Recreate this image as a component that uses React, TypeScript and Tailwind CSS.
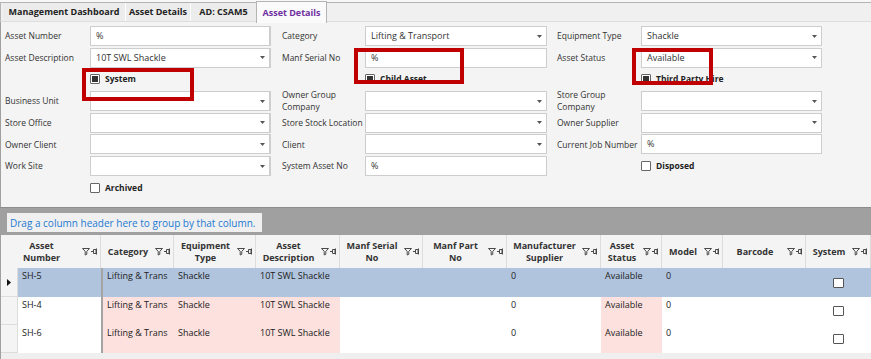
import React from "react";

const Arrow = () => (
  <svg width="5" height="3" viewBox="0 0 5 3" className="shrink-0">
    <path d="M0 0H5L2.5 3Z" fill="#555" />
  </svg>
);

function Input({ value, dd }: { value?: string; dd?: boolean }) {
  return (
    <div className="h-[20px] bg-white border border-[#cdcdcd] flex items-center pl-[5px] pr-[4px] text-[#333]">
      <span className="flex-1 whitespace-nowrap overflow-hidden">{value}</span>
      {dd && <Arrow />}
    </div>
  );
}

function Check({ checked, label }: { checked?: boolean; label: string }) {
  return (
    <div className="flex items-center gap-[5px] h-[20px]">
      <span className="w-[10px] h-[10px] border border-[#666] bg-white rounded-[1px] flex items-center justify-center shrink-0">
        {checked && <span className="w-[6px] h-[6px] bg-[#333]" />}
      </span>
      <span className="font-bold text-[8.5px] text-[#222] whitespace-nowrap">{label}</span>
    </div>
  );
}

function Label({ children, mid, last }: { children?: React.ReactNode; mid?: boolean; last?: boolean }) {
  return (
    <div
      className={
        "flex items-center text-[8.5px] leading-[11.6px] text-[#333] whitespace-nowrap " +
        (mid ? "pl-[11px] border-l border-[#cfcfcf]" : last ? "pl-[10px]" : "")
      }
    >
      {children}
    </div>
  );
}

const FilterPin = () => (
  <svg width="16" height="9" viewBox="0 0 16 9" className="shrink-0">
    <path d="M0.5 1.5H7.5L4.8 4.3V7.3L3.2 8V4.3Z" fill="none" stroke="#4a4a4a" strokeWidth="1" strokeLinejoin="round" />
    <path d="M9 4.5H11.5" stroke="#4a4a4a" strokeWidth="1" />
    <path d="M11.5 2.5H14V6.5H11.5Z" fill="none" stroke="#4a4a4a" strokeWidth="1" />
    <path d="M14.5 1.5V7.5" stroke="#4a4a4a" strokeWidth="1" />
  </svg>
);

type Col = { key: string; title: string[]; w: number; pink?: boolean };

const cols: Col[] = [
  { key: "num", title: ["Asset", "Number"], w: 83 },
  { key: "cat", title: ["Category"], w: 73, pink: true },
  { key: "eq", title: ["Equipment", "Type"], w: 82, pink: true },
  { key: "desc", title: ["Asset", "Description"], w: 84, pink: true },
  { key: "serial", title: ["Manf Serial", "No"], w: 83 },
  { key: "part", title: ["Manf Part", "No"], w: 84 },
  { key: "sup", title: ["Manufacturer", "Supplier"], w: 94 },
  { key: "status", title: ["Asset", "Status"], w: 61, pink: true },
  { key: "model", title: ["Model"], w: 61 },
  { key: "barcode", title: ["Barcode"], w: 83 },
  { key: "system", title: ["System"], w: 65 },
];

const rows: Record<string, string>[] = [
  { num: "SH-5", cat: "Lifting & Trans", eq: "Shackle", desc: "10T SWL Shackle", sup: "0", status: "Available", model: "0" },
  { num: "SH-4", cat: "Lifting & Trans", eq: "Shackle", desc: "10T SWL Shackle", sup: "0", status: "Available", model: "0" },
  { num: "SH-6", cat: "Lifting & Trans", eq: "Shackle", desc: "10T SWL Shackle", sup: "0", status: "Available", model: "0" },
];
const rowH = [29, 28, 28];

export default function App() {
  return (
    <div className="relative w-[871px] h-[359px] overflow-hidden bg-[#f4f4f4] font-['Open_Sans','Noto_Sans',sans-serif] text-[9px] leading-[12px] text-[#333]">
      {/* Tabs */}
      <div className="h-[22px] pt-[2px] bg-[#f7f7f7]">
        <div className="h-[20px] border-t border-l border-[#b4b4b4] bg-[#f0f0f0] flex items-stretch pl-[2px] border-b border-b-[#dedede]">
          <div className="w-[123px] flex items-center justify-center font-bold text-[#222] bg-[#ececec] border-r border-white">
            Management Dashboard
          </div>
          <div className="w-[65px] flex items-center justify-center font-bold text-[#222] bg-[#ececec] border-r border-white">
            Asset Details
          </div>
          <div className="w-[65px] flex items-center justify-center font-bold text-[#222] bg-[#ececec]">
            AD: CSAM5
          </div>
          <div className="w-[71px] -mt-[2px] h-[22px] flex items-center justify-center font-bold text-[#70309f] bg-[#fafafa] border-x border-t border-[#b4b4b4]">
            Asset Details
          </div>
        </div>
      </div>

      {/* Form */}
      <div className="h-[185px] border-l border-[#a0a0a0] bg-[#f4f4f4] pt-[4px] pl-[4px]">
        <div className="grid grid-cols-[85px_180px_95px_182px_94px_181px] auto-rows-[20px] gap-y-[1.7px]">
          <Label>Asset Number</Label>
          <Input value="%" />
          <Label mid>Category</Label>
          <Input value="Lifting & Transport" dd />
          <Label last>Equipment Type</Label>
          <Input value="Shackle" dd />

          <Label>Asset Description</Label>
          <Input value="10T SWL Shackle" dd />
          <Label mid>Manf Serial No</Label>
          <Input value="%" />
          <Label last>Asset Status</Label>
          <Input value="Available" dd />

          <div />
          <Check checked label="System" />
          <div />
          <Check checked label="Child Asset" />
          <div />
          <Check checked label="Third Party Hire" />

          <Label>Business Unit</Label>
          <Input dd />
          <Label mid>
            Owner Group
            <br />
            Company
          </Label>
          <Input dd />
          <Label last>
            Store Group
            <br />
            Company
          </Label>
          <Input dd />

          <Label>Store Office</Label>
          <Input dd />
          <Label mid>Store Stock Location</Label>
          <Input dd />
          <Label last>Owner Supplier</Label>
          <Input dd />

          <Label>Owner Client</Label>
          <Input dd />
          <Label mid>Client</Label>
          <Input dd />
          <Label last>Current Job Number</Label>
          <Input value="%" />

          <Label>Work Site</Label>
          <Input dd />
          <Label mid>System Asset No</Label>
          <Input value="%" />
          <div />
          <Check label="Disposed" />

          <div />
          <Check label="Archived" />
        </div>
      </div>

      {/* Group panel */}
      <div className="h-[28px] bg-[#a0a0a0] border-t border-[#8c8c8c] pl-[7px] pt-[5px]">
        <div className="w-[255px] h-[19px] bg-[#f0f0f0] flex items-center pl-[3px] text-[10px] text-[#2379d0] whitespace-nowrap">
          Drag a column header here to group by that column.
        </div>
      </div>

      {/* Grid header */}
      <div className="flex h-[33px] bg-[#f4f4f4] border-l border-[#a0a0a0]">
        {cols.map((c, i) => (
          <div
            key={c.key}
            style={{ width: i === 0 ? c.w + 17 : c.w }}
            className="flex items-center border-r border-[#dcdcdc] pr-[2px]"
          >
            <div className="flex-1 text-center font-bold text-[#333] leading-[12px] whitespace-nowrap">
              {c.title.map((t, j) => (
                <div key={j}>{t}</div>
              ))}
            </div>
            <FilterPin />
          </div>
        ))}
      </div>

      {/* Grid rows */}
      {rows.map((r, ri) => (
        <div key={ri} className="flex border-l border-[#a0a0a0]" style={{ height: rowH[ri] }}>
          <div className="w-[17px] bg-[#f4f4f4] border-r border-b border-[#dcdcdc] flex items-center pl-[6px]">
            {ri === 0 && (
              <svg width="4" height="7" viewBox="0 0 4 7">
                <path d="M0 0L4 3.5L0 7Z" fill="#111" />
              </svg>
            )}
          </div>
          {cols.map((c) => {
            const bg = ri === 0 ? "bg-[#b0c4de]" : c.pink ? "bg-[#fde1de]" : "bg-white";
            return (
              <div
                key={c.key}
                style={{ width: c.w }}
                className={
                  bg +
                  " pt-[2px] pl-[4px] whitespace-nowrap overflow-hidden text-[#222] " +
                  (c.key === "cat" ? "border-l-2 border-[#a4a4a4] pl-[3px]" : "")
                }
              >
                {c.key === "system" ? (
                  <div className="h-full flex items-center justify-center pr-[4px] -mt-[1px]">
                    <span className="w-[11px] h-[10px] border border-[#555] bg-white rounded-[1px]" />
                  </div>
                ) : (
                  r[c.key] ?? ""
                )}
              </div>
            );
          })}
        </div>
      ))}
      <div className="h-[6px] bg-[#efefef] border-l border-[#a0a0a0]" />

      {/* Red annotation rectangles */}
      <div className="absolute left-[82px] top-[68px] w-[112px] h-[33px] border-4 border-[#c00000]" />
      <div className="absolute left-[354px] top-[48px] w-[110px] h-[36px] border-4 border-[#c00000]" />
      <div className="absolute left-[632px] top-[48px] w-[81px] h-[37px] border-4 border-[#c00000]" />
    </div>
  );
}
